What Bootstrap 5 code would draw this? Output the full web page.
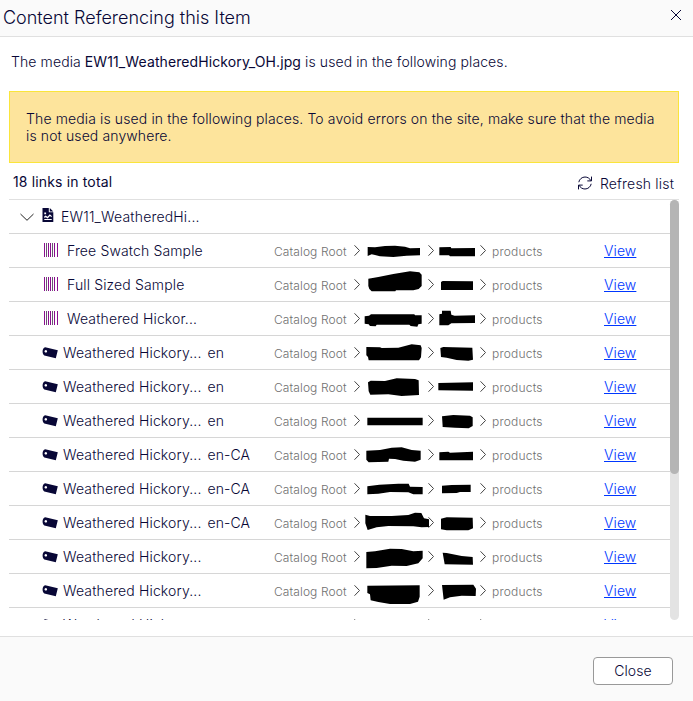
<!DOCTYPE html>
<html lang="en">
<head>
<meta charset="utf-8">
<meta name="viewport" content="width=device-width, initial-scale=1">
<title>Content Referencing this Item</title>
<link href="https://cdn.jsdelivr.net/npm/bootstrap@5.3.0/dist/css/bootstrap.min.css" rel="stylesheet">
<style>
  body { font-family: Inter, "Liberation Sans", sans-serif; font-weight: 300; font-size: 14px; line-height: 17px; letter-spacing: .1px; color: #080736; }
  .dialog-head { height: 37px; background: #fafafa; border-bottom: 1px solid #e0e0e0; padding: 0 11px 1px 3px; }
  .dialog-title { font-size: 18px; font-weight: 300; line-height: 22px; letter-spacing: 0; }
  .close-icon { margin-bottom: 6px; }
  .dialog-body { padding: 16px 14px 16px 9px; }
  .intro { padding-left: 2px; margin-bottom: 21px; line-height: 17px; }
  .intro strong { font-weight: 400; }
  .notice { height: 72px; padding: 18px 16px 0; background: #fde49c; border: 1px solid #fae53b; letter-spacing: .12px; }
  .toolbar { height: 36px; padding: 10px 5px 0 4px; }
  .total { font-weight: 400; letter-spacing: .15px; }
  .refresh { height: 20px; letter-spacing: .18px; }
  .link-list { height: 421px; border-top: 1px solid #e0e0e0; }
  .rows { width: 661px; }
  .link-row { height: 34px; border-bottom: 1px solid #d6d6d6; flex: none; }
  .item-name { letter-spacing: .14px; }
  .name-cell { width: 265px; padding-left: 33px; }
  .parent-row { padding-left: 11px; }
  .parent-row .item-name { letter-spacing: .18px; margin-left: -1px; }
  .icon-bars { margin-right: 7px; margin-bottom: 1px; }
  .icon-tag { margin-right: 5px; margin-top: 1px; }
  .item-lang { margin-left: 6px; }
  .crumbs { width: 330px; font-size: 12px; color: #707070; }
  .crumbs svg { flex: none; overflow: visible; }
  .crumb-root { width: 80px; padding-top: 1px; }
  .crumb-leaf { padding-left: 6px; padding-top: 1px; letter-spacing: .2px; }
  .chev { margin-bottom: 1px; }
  .crumbs .chev + svg { margin-left: 2px; }
  .view-link { color: #0037ff; }
  .scroll-track { width: 9px; background: #e3e3e3; border-radius: 5px; }
  .scroll-thumb { height: 274px; background: #b5b5b5; border-radius: 5px; }
  .dialog-foot { background: #fafafa; border-top: 1px solid #e0e0e0; padding: 20px 20px 0 0; }
  .btn-close-dialog { width: 80px; height: 28px; padding: 0 0 1px; font-size: 14px; font-weight: 300; line-height: 17px; letter-spacing: .1px; color: #080736; background: #fff; border: 1px solid #999; border-radius: 4px; }
</style>
<script src="https://cdn.jsdelivr.net/npm/bootstrap@5.3.0/dist/js/bootstrap.bundle.min.js"></script>
</head>
<body class="vh-100 d-flex flex-column overflow-hidden">
  <header class="dialog-head d-flex justify-content-between align-items-center">
    <h1 class="dialog-title m-0">Content Referencing this Item</h1>
    <svg class="close-icon" width="12" height="12" viewBox="0 0 12 12" fill="none" stroke="#080736" aria-label="Close"><path d="M1 1l10 10M11 1L1 11"/></svg>
  </header>

  <main class="dialog-body">
    <p class="intro">The media <strong>EW11_WeatheredHickory_OH.jpg</strong> is used in the following places.</p>
    <div class="notice">The media is used in the following places. To avoid errors on the site, make sure that the media is not used anywhere.</div>
    <div class="toolbar d-flex justify-content-between align-items-start">
      <span class="total">18 links in total</span>
      <span class="refresh d-flex align-items-center">
        <svg class="me-2" width="14" height="14" viewBox="0 0 14 14" fill="none" stroke="#080736"><path d="M.8 6.2C1.300 3.200 4 1 7 1c2.600 0 4.700 1.400 6 3.800M13.500.6v4.300H9.300M13.200 7.800C12.700 10.800 10 13 7 13c-2.600 0-4.700-1.400-6-3.800M.5 13.400V9.100h4.200"/></svg>
        Refresh list
      </span>
    </div>
    <div class="link-list d-flex">
      <div class="rows d-flex flex-column overflow-hidden" id="rows">
        <div class="link-row parent-row d-flex align-items-center">
          <svg width="14" height="8" viewBox="0 0 14 8" fill="none" stroke="#222" class="me-2"><path d="M.5 1L7 7.300 13.500 1"/></svg>
          <svg width="12" height="14" viewBox="0 0 12 14" class="me-2 mb-1"><path fill="#080736" d="M.5 0h6.300v4.300h4.500V14H.5zM7.800 0l3.500 3.400H7.800z"/><path fill="#fff" d="M2.300 4.500h1.800v1.700H2.300zM2.300 8.300l1.400-.9 1.800 1.400 2.300-2.600 1.900 1.700v1.300L7.900 8.100 5.700 10.500 3.800 9.200 2.300 10zM2.300 11h7.400v.900H2.300z"/></svg>
          <span class="item-name">EW11_WeatheredHi...</span>
        </div>
      </div>
      <div class="scroll-track"><div class="scroll-thumb"></div></div>
    </div>
  </main>

  <footer class="dialog-foot flex-grow-1 d-flex justify-content-end align-items-start">
    <button type="button" class="btn btn-close-dialog">Close</button>
  </footer>

<script>
  // Each redaction is a polygon drawn in thirds of a pixel; "top" is the y origin of its row.
  const tag = 'Weathered Hickory...';
  const items = [
    { kind: 'bars', name: 'Free Swatch Sample', x: [306, 528], top: 192,
      a: '323,231 345,232 375,228 405,227 435,230 450,235 480,234 480,256 440,257 400,261 360,259 345,255 335,253 323,258',
      b: '538,232 572,231 574,235 645,234 645,259 570,259 567,256 538,256' },
    { kind: 'bars', name: 'Full Sized Sample', x: [306, 528], top: 294,
      a: '325,326 355,321 400,312 450,304 478,307 485,314 485,348 476,357 460,361 408,361 406,364 335,364 328,357 325,348',
      b: '543,336 548,333 639,334 639,360 543,360' },
    { kind: 'bars', name: 'Weathered Hickor...', x: [306, 528], top: 396,
      a: '314,439 327,437 333,433 463,433 465,436 485,436 485,461 475,463 472,470 452,468 448,464 350,464 347,469 330,468 326,463 314,461',
      b: '538,433 546,431 546,422 572,422 574,434 584,437 645,436 645,459 574,460 565,466 538,466' },
    { kind: 'tag', name: tag, lang: 'en', x: [66, 288], top: 3,
      a: '79,36 120,37 125,39 175,38 215,28 242,31 245,39 243,67 237,76 86,76 84,66 79,61',
      b: '301,39 310,36 397,38 399,74 385,77 350,75 320,68 303,66' },
    { kind: 'tag', name: tag, lang: 'en', x: [66, 288], top: 105,
      a: '84,142 92,137 135,138 170,130 225,132 236,136 237,180 185,183 145,178 91,179 86,169',
      b: '295,144 399,142 399,167 295,166' },
    { kind: 'tag', name: tag, lang: 'en', x: [66, 288], top: 207,
      a: '82,248 248,248 248,271 82,271',
      b: '306,244 340,240 390,242 398,247 398,273 386,280 345,278 308,276' },
    { kind: 'tag', name: tag, lang: 'en-CA', x: [66, 288], top: 309,
      a: '79,347 120,345 155,338 185,337 215,345 242,347 242,374 225,380 190,377 165,372 147,371 145,380 86,382 79,374',
      b: '298,352 325,350 330,353 399,350 399,376 298,376' },
    { kind: 'tag', name: tag, lang: 'en-CA', x: [66, 288], top: -9,
      a: '82,34 118,29 175,26 206,26 210,35 248,36 248,58 220,58 205,52 150,51 115,56 82,58',
      b: '306,32 335,30 392,29 392,51 360,51 350,54 306,55' },
    { kind: 'tag', name: tag, lang: 'en-CA', x: [66, 288], top: 93,
      a: '76,119 90,123 155,123 205,120 225,113 244,114 252,130 267,133 267,156 245,157 220,154 145,153 110,157 83,165 76,145',
      b: '303,131 320,127 398,128 399,160 385,166 320,166 303,163' },
    { kind: 'tag', name: tag, x: [66, 288], top: 195,
      a: '79,231 105,229 150,221 185,222 220,229 248,227 248,250 235,265 200,273 155,272 110,279 79,280',
      b: '308,233 320,234 365,243 398,246 399,269 314,268' },
    { kind: 'tag', name: tag, x: [66, 288], top: 297,
      a: '82,332 239,331 239,365 234,380 210,387 150,387 115,381 92,376 90,358 82,354',
      b: '306,330 400,329 408,341 407,363 365,362 330,367 311,374' },
    { kind: 'tag', name: tag, x: [66, 288], top: 0, a: '', b: '' }
  ];
  const bars = `<svg class="icon-bars" width="18" height="14" viewBox="0 0 18 14" shape-rendering="crispEdges"><path fill="#8a0f8f" d="M2 0h1v14H2zM6 0h1v14H6zM8 0h1v14H8zM12 0h1v14h-1zM15 0h1v14h-1z"/><path fill="#66586e" d="M4 0h1v14H4zM10 0h1v14h-1zM18 0h1v14h-1z"/></svg>`;
  const tagIcon = `<svg class="icon-tag" width="16" height="12" viewBox="0 0 16 12"><path fill="#080736" fill-rule="evenodd" d="M3.200.3L15.800 3.200 13.800 11.300 2.300 8.400C-.3 7 .1.800 3.200.300zM3.800 3a1.300 1.300 0 1 0 .01 0z"/></svg>`;
  const chev = `<svg class="chev" width="6" height="11" viewBox="0 0 6 11" fill="none" stroke="#444"><path d="M.5.300L5.500 5.500.5 10.700"/></svg>`;
  const blot = (pts, x, y, w) => `<svg width="${w}" height="33" viewBox="${x} ${y} ${w * 3} 99"><polygon points="${pts}"/></svg>`;
  document.getElementById('rows').insertAdjacentHTML('beforeend', items.map(i => `
    <div class="link-row d-flex align-items-center">
      <div class="name-cell d-flex align-items-center">${i.kind === 'bars' ? bars : tagIcon}<span class="item-name">${i.name}</span>${i.lang ? `<span class="item-lang">${i.lang}</span>` : ''}</div>
      <div class="crumbs d-flex align-items-center"><span class="crumb-root">Catalog Root</span>${chev}${blot(i.a, i.x[0], i.top, 66)}${chev}${blot(i.b, i.x[1], i.top, 44)}${chev}<span class="crumb-leaf">products</span></div>
      <a href="#" class="view-link">View</a>
    </div>`).join(''));
</script>
</body>
</html>
